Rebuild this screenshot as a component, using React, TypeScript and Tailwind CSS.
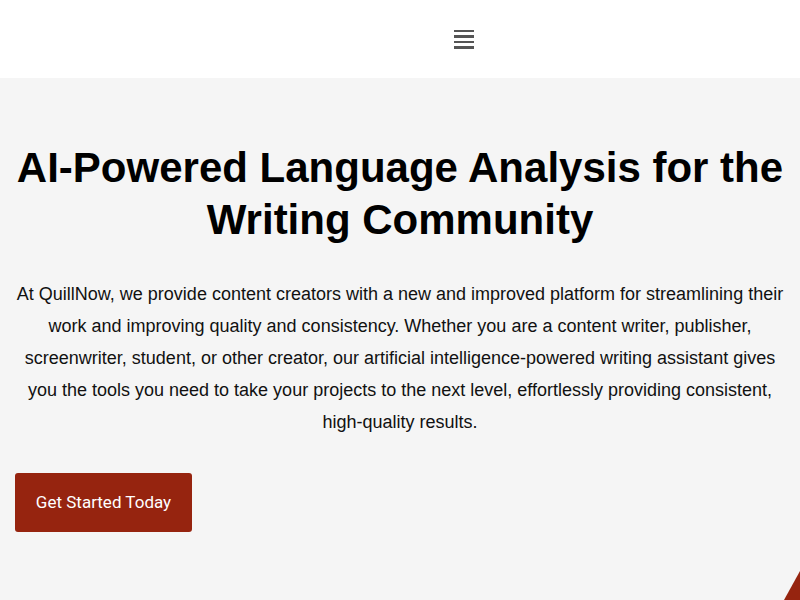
export default function App() {
  return (
    <div className="relative min-h-[600px] overflow-hidden bg-[#f5f5f5] font-['Liberation_Sans',Arial,sans-serif]">
      <header className="flex h-[78px] items-center justify-center bg-white">
        <button className="ml-[128px] flex flex-col gap-[3px]" aria-label="Menu">
          <span className="block h-[2.5px] w-[20px] bg-[#555]" />
          <span className="block h-[2.5px] w-[20px] bg-[#555]" />
          <span className="block h-[2.5px] w-[20px] bg-[#555]" />
          <span className="block h-[2.5px] w-[20px] bg-[#555]" />
        </button>
      </header>
      <main className="px-[15px] pt-[64px]">
        <h1 className="text-center text-[42px] font-bold leading-[52px] text-black">
          AI-Powered Language Analysis for the Writing Community
        </h1>
        <p className="mt-[32px] text-center text-[18px] leading-[32px] text-[#111]">
          At QuillNow, we provide content creators with a new and improved platform for streamlining their work and improving quality and consistency. Whether you are a content writer, publisher, screenwriter, student, or other creator, our artificial intelligence-powered writing assistant gives you the tools you need to take your projects to the next level, effortlessly providing consistent, high-quality results.
        </p>
        <button className="mt-[35px] h-[59px] w-[177px] rounded-[3px] bg-[#96240f] font-['Roboto',sans-serif] text-[17px] text-white">
          Get Started Today
        </button>
      </main>
      <svg className="absolute bottom-0 right-0" width="16" height="29" viewBox="0 0 16 29">
        <polygon points="16,0 16,29 0,29" fill="#96240f" />
      </svg>
    </div>
  );
}
